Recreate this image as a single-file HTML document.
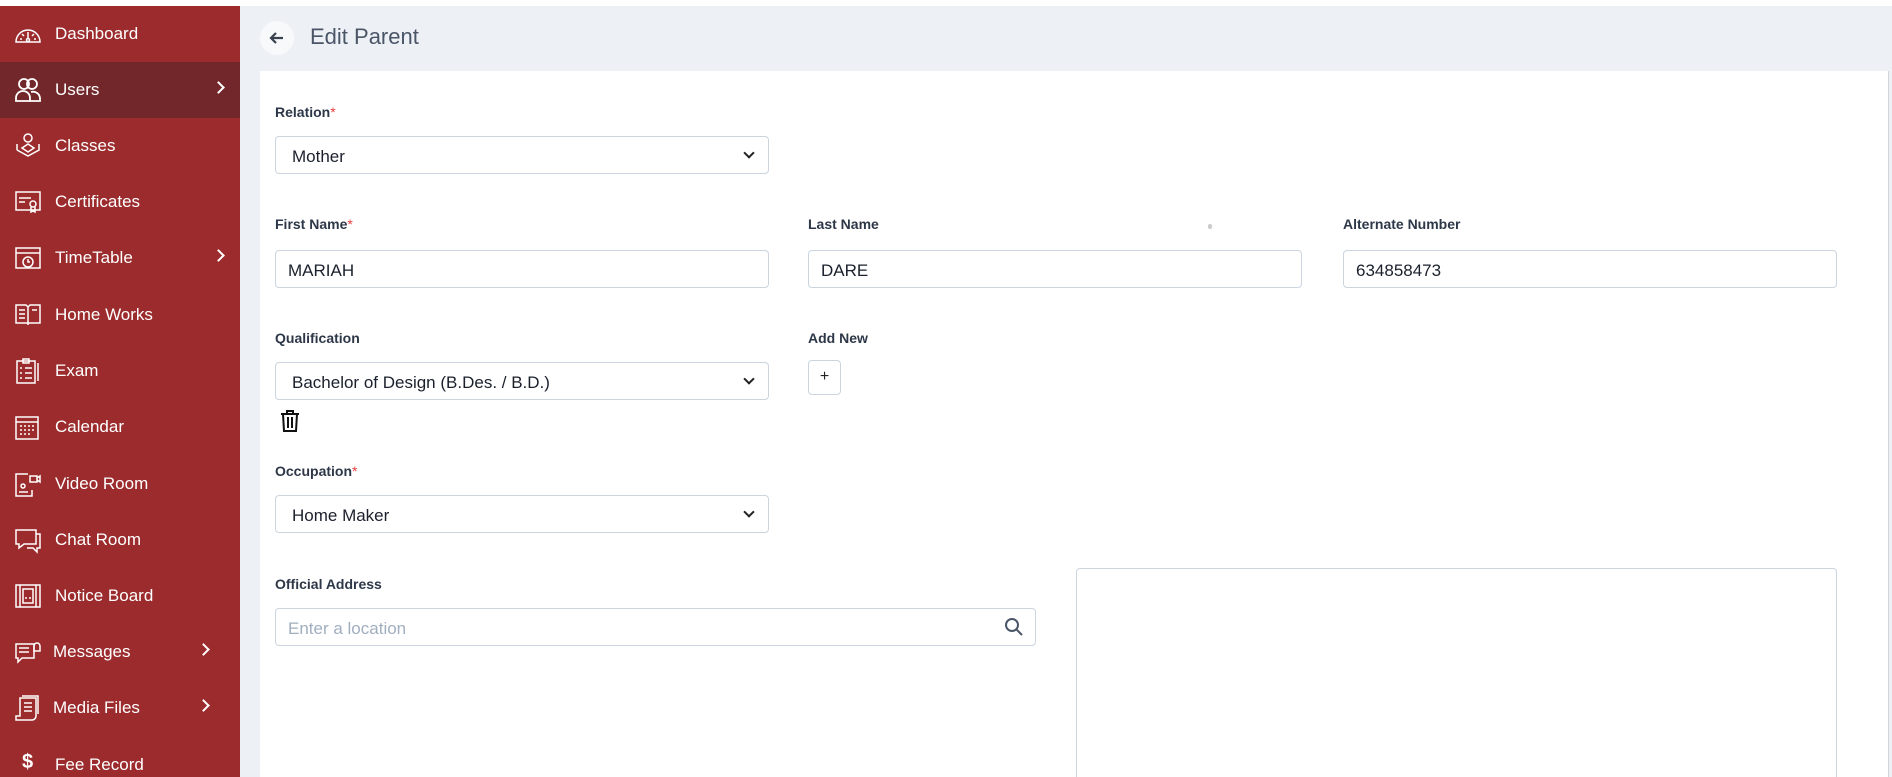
<!DOCTYPE html>
<html><head><meta charset="utf-8"><style>
*{margin:0;padding:0;box-sizing:border-box}
html,body{width:1892px;height:777px;overflow:hidden}
body{background:#fff;font-family:"Liberation Sans",sans-serif;position:relative}
.sb{position:absolute;left:0;top:6px;width:240px;height:771px;background:#9b2b2d}
.it{position:absolute;left:0;width:240px;height:56px;color:#fff;font-size:17px}
.it.act{background:#72282b}
.it span{position:absolute;left:55px;top:18px}
.it svg{position:absolute;left:14px;top:14px}
.it .ch{position:absolute;left:214px;top:21px;width:9px;height:9px;border-right:2px solid #fff;border-top:2px solid #fff;transform:rotate(45deg)}
.main{position:absolute;left:240px;top:6px;width:1652px;height:771px;background:#edf1f5}
.card{position:absolute;left:260px;top:71px;width:1628px;height:706px;background:#fff}
.lbl{position:absolute;font-size:14px;font-weight:bold;color:#2d3748}
.lbl b{color:#e53e3e;font-weight:normal}
.in{position:absolute;height:38px;border:1px solid #cbd5e0;border-radius:4px;background:#fff;font-size:17px;color:#1a202c;padding:10px 0 0 12px}
.in.sel{padding-left:16px}
.in.sel:after{content:"";position:absolute;right:15px;top:12px;width:6px;height:6px;border-right:2px solid #222;border-bottom:2px solid #222;transform:rotate(45deg)}
</style></head><body>
<div class="sb">
<div class="it" style="top:0"><svg width="28" height="28" viewBox="0 0 28 28" fill="none" stroke="#fff" stroke-width="1.5"><path d="M2 22a12 12 0 0 1 24 0zM14 12v7M8 14l2 2M20 14l-2 2M6 19h2M20 19h2"/><circle cx="14" cy="20" r="1.5"/></svg><span>Dashboard</span></div>
<div class="it act" style="top:56px"><svg width="28" height="28" viewBox="0 0 28 28" fill="none" stroke="#fff" stroke-width="1.8"><circle cx="10" cy="8" r="5"/><circle cx="18" cy="8" r="5"/><path d="M2 25v-3a7 7 0 0 1 14 0v3zM16 25h10v-3a7 7 0 0 0-9-6"/></svg><span>Users</span><i class="ch"></i></div>
<div class="it" style="top:112px"><svg width="28" height="28" viewBox="0 0 28 28" fill="none" stroke="#fff" stroke-width="1.5"><circle cx="14" cy="6" r="4"/><path d="M8 16l6-4 6 4-6 4zM3 18l11 6 11-6v-6M3 18v-6"/></svg><span>Classes</span></div>
<div class="it" style="top:168px"><svg width="28" height="28" viewBox="0 0 28 28" fill="none" stroke="#fff" stroke-width="1.5"><rect x="2" y="4" width="24" height="18"/><path d="M5 10h12M5 14h6"/><circle cx="19" cy="16" r="3"/><path d="M17 19v5l2-1 2 1v-5"/></svg><span>Certificates</span></div>
<div class="it" style="top:224px"><svg width="28" height="28" viewBox="0 0 28 28" fill="none" stroke="#fff" stroke-width="1.5"><rect x="2" y="4" width="24" height="20"/><path d="M2 9h24"/><circle cx="14" cy="18" r="5"/><path d="M14 15v3h2"/></svg><span>TimeTable</span><i class="ch"></i></div>
<div class="it" style="top:281px"><svg width="28" height="28" viewBox="0 0 28 28" fill="none" stroke="#fff" stroke-width="1.5"><path d="M2 4h10l2 2 2-2h10v18H2zM14 6v18M5 9h6M5 13h6M5 17h6M18 9h5"/></svg><span>Home Works</span></div>
<div class="it" style="top:337px"><svg width="28" height="28" viewBox="0 0 28 28" fill="none" stroke="#fff" stroke-width="1.5"><rect x="3" y="4" width="18" height="22"/><path d="M9 2h6v4H9zM6 11h2M11 11h7M6 16h2M11 16h7M6 21h2M11 21h7M24 6v18"/></svg><span>Exam</span></div>
<div class="it" style="top:393px"><svg width="28" height="28" viewBox="0 0 28 28" fill="none" stroke="#fff" stroke-width="1.5"><rect x="2" y="4" width="22" height="22"/><path d="M2 9h22M6 13h2M10 13h2M14 13h2M18 13h2M6 17h2M10 17h2M14 17h2M18 17h2M6 21h2M10 21h2M14 21h2"/></svg><span>Calendar</span></div>
<div class="it" style="top:450px"><svg width="28" height="28" viewBox="0 0 28 28" fill="none" stroke="#fff" stroke-width="1.5"><path d="M14 4H2v22h16v-6"/><rect x="16" y="6" width="7" height="6"/><path d="M23 8l3-2v6l-3-2"/><circle cx="9" cy="16" r="2"/><path d="M5 22h9"/></svg><span>Video Room</span></div>
<div class="it" style="top:506px"><svg width="28" height="28" viewBox="0 0 28 28" fill="none" stroke="#fff" stroke-width="1.5"><path d="M2 4h20v14H10l-5 4v-4H2zM22 8h4v14h-3v4l-4-4h-6"/></svg><span>Chat Room</span></div>
<div class="it" style="top:562px"><svg width="28" height="28" viewBox="0 0 28 28" fill="none" stroke="#fff" stroke-width="1.5"><rect x="2" y="3" width="24" height="22"/><path d="M6 3v22M22 3v22M9 7h10v14H9zM11 16h2M15 16h2"/></svg><span>Notice Board</span></div>
<div class="it" style="top:618px"><svg width="28" height="28" viewBox="0 0 28 28" fill="none" stroke="#fff" stroke-width="1.5"><path d="M2 6h18v14H8l-4 4v-4H2zM5 10h10M5 14h10"/><path d="M20 8a3 3 0 0 1 6 0v5h-6z"/></svg><span style="left:53px">Messages</span><i class="ch" style="left:199px"></i></div>
<div class="it" style="top:674px"><svg width="28" height="28" viewBox="0 0 28 28" fill="none" stroke="#fff" stroke-width="1.5"><path d="M6 4h16v18a4 4 0 0 1-4 4H2v-4h4zM10 9h8M10 13h8M10 17h8M8 2h16v18"/></svg><span style="left:53px">Media Files</span><i class="ch" style="left:199px"></i></div>
<div class="it" style="top:731px"><span style="left:22px;font-weight:bold;font-size:20px;top:14px">$</span><span>Fee Record</span></div>
</div>
<div class="main"></div>
<div style="position:absolute;left:260px;top:21px;width:34px;height:34px;border-radius:50%;background:#f7f9fb"></div>
<svg style="position:absolute;left:268px;top:29px" width="18" height="18" viewBox="0 0 18 18" fill="none" stroke="#3a4250" stroke-width="2.2"><path d="M15 9H3M8 4L3 9l5 5"/></svg>
<div style="position:absolute;left:310px;top:24px;font-size:22px;color:#4a5568">Edit Parent</div>
<div class="card"></div>
<div class="lbl" style="left:275px;top:104px">Relation<b>*</b></div>
<div class="in sel" style="left:275px;top:136px;width:494px">Mother</div>
<div class="lbl" style="left:275px;top:216px">First Name<b>*</b></div>
<div class="in" style="left:275px;top:250px;width:494px">MARIAH</div>
<div class="lbl" style="left:808px;top:216px">Last Name</div>
<div style="position:absolute;left:1208px;top:224px;width:4px;height:5px;border-radius:2px;background:#ccc"></div>
<div class="in" style="left:808px;top:250px;width:494px">DARE</div>
<div class="lbl" style="left:1343px;top:216px">Alternate Number</div>
<div class="in" style="left:1343px;top:250px;width:494px">634858473</div>
<div class="lbl" style="left:275px;top:330px">Qualification</div>
<div class="in sel" style="left:275px;top:362px;width:494px">Bachelor of Design (B.Des. / B.D.)</div>
<div class="lbl" style="left:808px;top:330px">Add New</div>
<div style="position:absolute;left:808px;top:360px;width:33px;height:35px;border:1px solid #cbd5e0;border-radius:4px;font-size:16px;text-align:center;line-height:32px;color:#222">+</div>
<svg style="position:absolute;left:280px;top:410px" width="20" height="22" viewBox="0 0 20 22" fill="none" stroke="#111" stroke-width="2"><path d="M1 4h18M7 4V1h6v3M3 4l1 17h12l1-17M8 7v11M12 7v11"/></svg>
<div class="lbl" style="left:275px;top:463px">Occupation<b>*</b></div>
<div class="in sel" style="left:275px;top:495px;width:494px">Home Maker</div>
<div class="lbl" style="left:275px;top:576px">Official Address</div>
<div class="in" style="left:275px;top:608px;width:761px;color:#a0aec0">Enter a location</div>
<svg style="position:absolute;left:1004px;top:617px" width="20" height="20" viewBox="0 0 20 20" fill="none" stroke="#4a5568" stroke-width="2"><circle cx="8" cy="8" r="6"/><path d="M12.5 12.5L18 18"/></svg>
<div style="position:absolute;left:1076px;top:568px;width:761px;height:209px;border:1px solid #cbd5e0;border-bottom:none;border-radius:4px 4px 0 0"></div>
<div style="position:absolute;left:1888px;top:71px;width:1px;height:706px;background:#d0d5da"></div>
</body></html>
